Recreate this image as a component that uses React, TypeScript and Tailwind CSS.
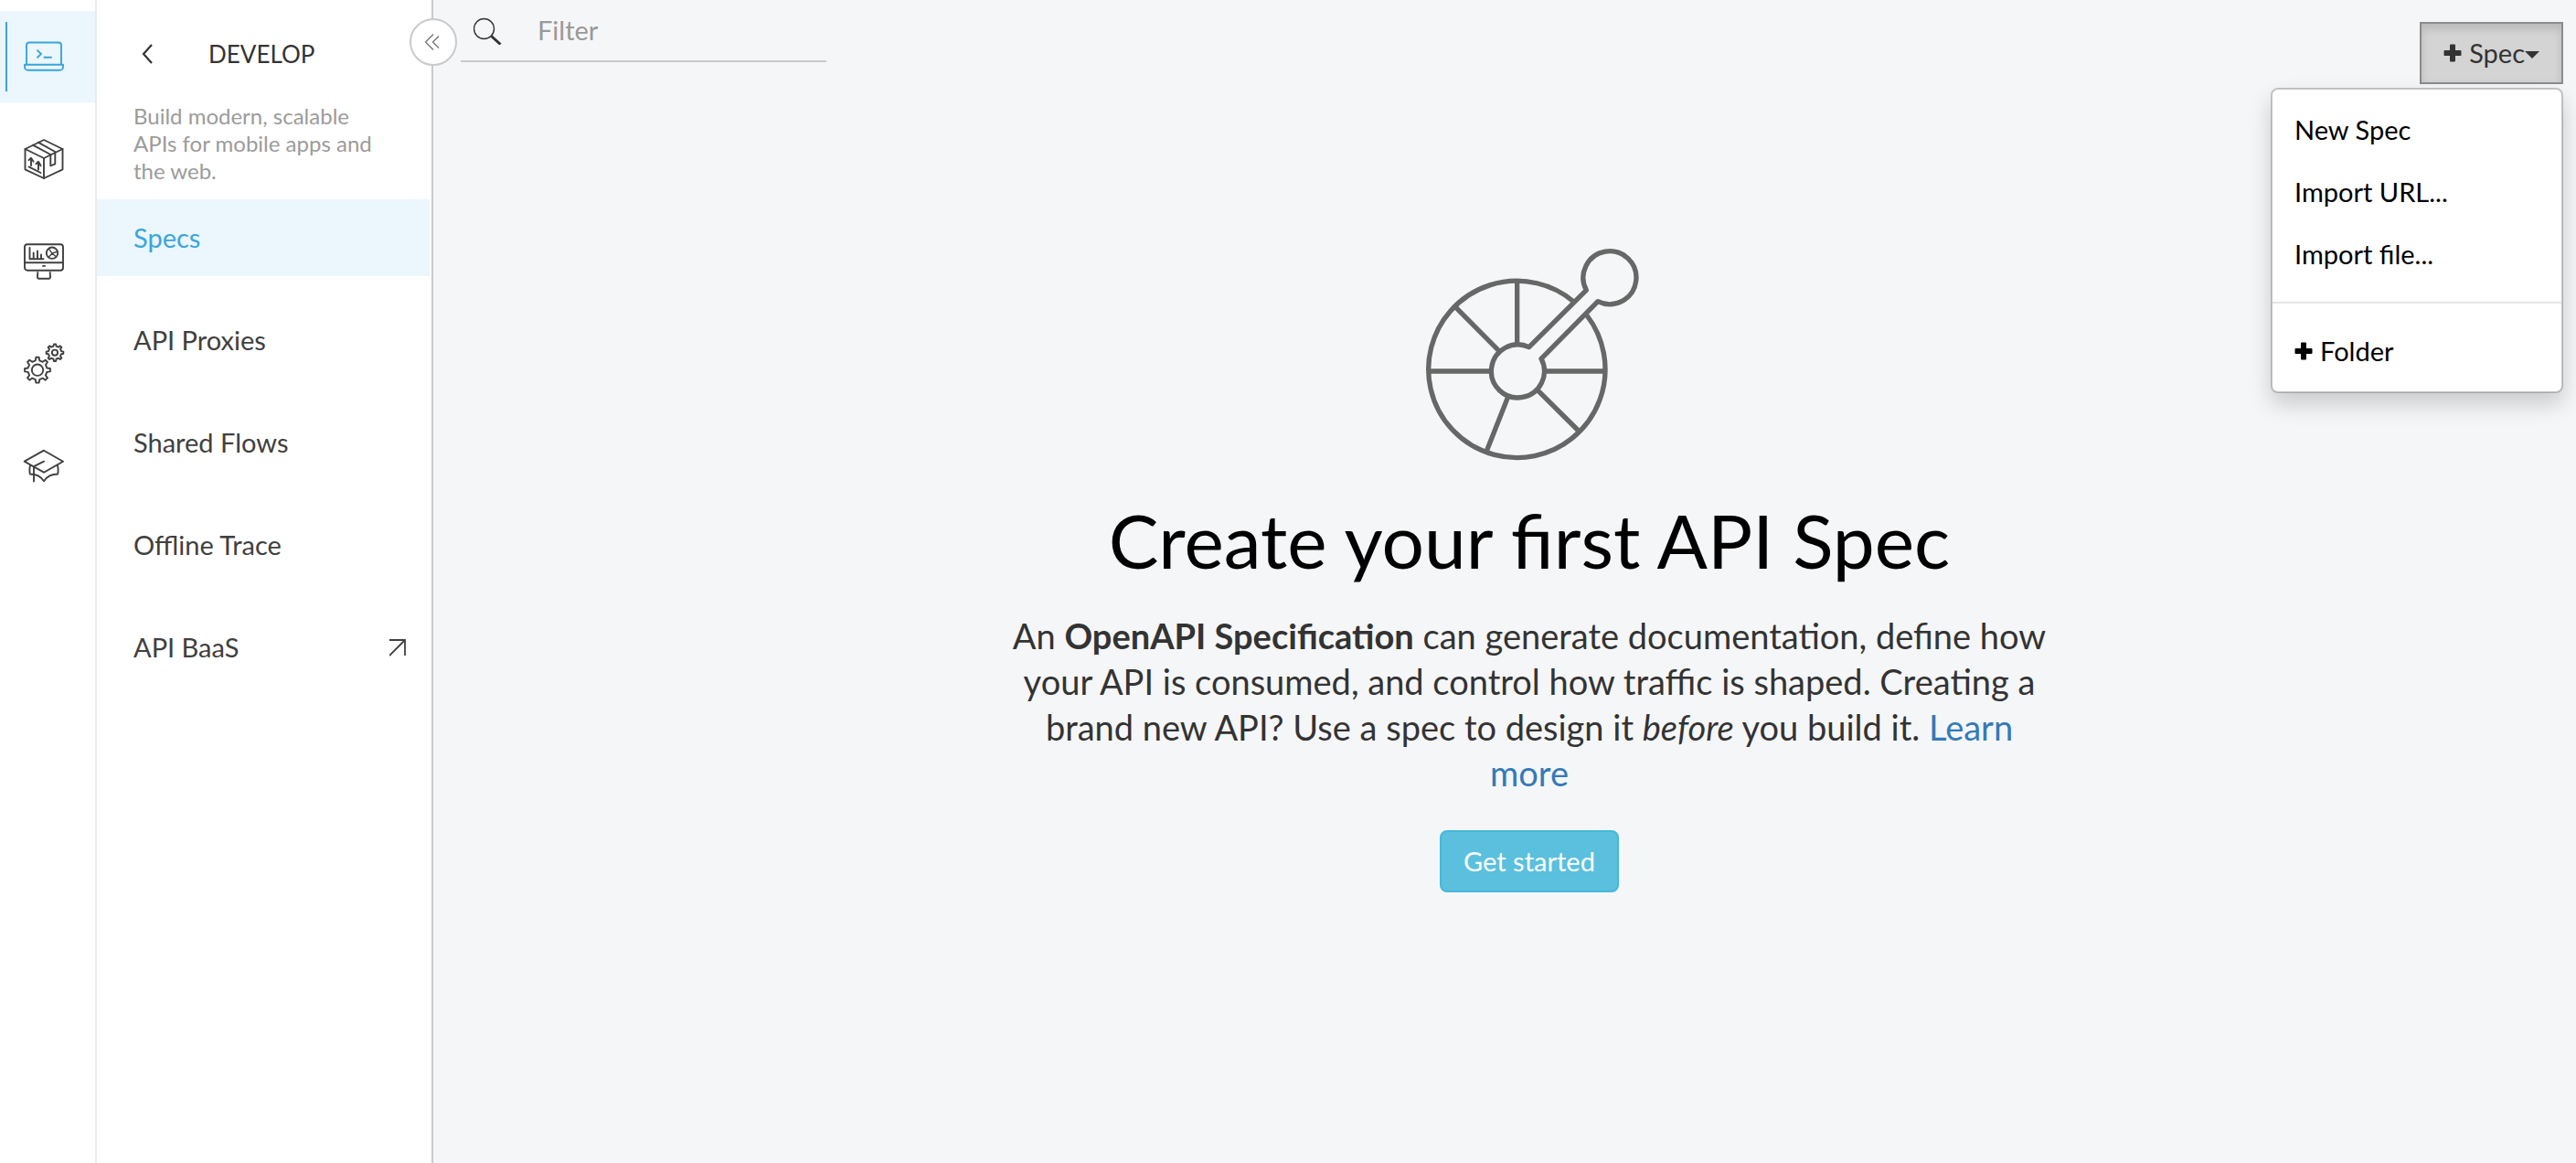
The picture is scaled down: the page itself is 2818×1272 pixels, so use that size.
import type { ReactNode } from "react";

function gearPath(cx: number, cy: number, outer: number, root: number, teeth: number) {
  const step = (Math.PI * 2) / teeth;
  const offsets: [number, number][] = [
    [-0.27, root],
    [-0.15, outer],
    [0.15, outer],
    [0.27, root],
  ];
  const points: string[] = [];
  for (let i = 0; i < teeth; i++) {
    for (const [offset, radius] of offsets) {
      const angle = step * (i + offset) - Math.PI / 2;
      points.push(`${(cx + radius * Math.cos(angle)).toFixed(2)} ${(cy + radius * Math.sin(angle)).toFixed(2)}`);
    }
  }
  return `M${points.join("L")}Z`;
}

function RailIcon({ children }: { children: ReactNode }) {
  return (
    <svg
      className="size-12"
      viewBox="0 0 48 48"
      fill="none"
      stroke="currentColor"
      strokeWidth="1.9"
      strokeLinecap="round"
      strokeLinejoin="round"
      aria-hidden="true"
    >
      {children}
    </svg>
  );
}

const sections = [
  {
    label: "Develop",
    active: true,
    icon: (
      <>
        <path d="M5 32.5V11.5a3 3 0 0 1 3-3h32a3 3 0 0 1 3 3v21" />
        <path d="M3 32.8h42v2.4a3.5 3.5 0 0 1-3.500 3.500H6.500A3.500 3.500 0 0 1 3 35.200z" />
        <path d="M16.500 16.800l4.500 4.200-4.500 4.200M23.700 24.800h9" strokeLinecap="butt" />
      </>
    ),
  },
  {
    label: "Publish",
    active: false,
    icon: (
      <>
        <path d="M24 3l20.500 10v22.300L24 45 3.500 35.300V13z" />
        <path d="M3.500 13L24 23l20.500-10M24 23v22" />
        <path d="M12 8.700L31.300 19v12.300l5-2V16L17.700 5.700" />
        <path d="M10 31V23M7.500 25.200L10 22.700l2.600 4M18 35.500V27.300M15.400 29.200l2.600-2.400 2.600 4.400M7.500 32.400l13 6.600" />
      </>
    ),
  },
  {
    label: "Analyze",
    active: false,
    icon: (
      <>
        <rect x="3" y="5.200" width="42" height="28.600" rx="3" />
        <path d="M3 25.300h42M23 28.900h2" />
        <path d="M17.300 36c0 3-.6 4-.3 5.500.2 1 .7 1.200 1.500 1.200h11c.8 0 1.300-.2 1.500-1.200.3-1.500-.3-2.500-.3-5.500" />
        <path d="M8.500 9v12.300h15M12.700 21v-6.500M17 21v-8.500M21 21v-4.500" />
        <circle cx="33" cy="14.700" r="6.200" />
        <path d="M33 15.200l-3.500-5M33 15.200l5.800-2.200M33 15.200l-4 4.200M33 15.200l4.500 3.600" strokeWidth="1.400" />
      </>
    ),
  },
  {
    label: "Admin",
    active: false,
    icon: (
      <>
        <path d={gearPath(17, 30.7, 14, 10.6, 8)} />
        <circle cx="17" cy="30.700" r="6.200" />
        <path d={gearPath(36, 11.7, 9.4, 7.2, 8)} />
        <circle cx="36" cy="11.700" r="3.100" />
      </>
    ),
  },
  {
    label: "Learn",
    active: false,
    icon: (
      <>
        <path d="M24 6.700l21 12-21 12-21.300-12z" />
        <path d="M24 18.700l-11 5.500v16.300" />
        <path d="M9 23c-.8 3-.8 6-.2 9.500 6 0 11.500 2 15.200 7.800 3.700-5.800 9.200-7.800 15.200-7.800.6-3.500.6-6.500-.2-9.500" />
      </>
    ),
  },
];

const links = [
  { label: "Specs", active: true, external: false },
  { label: "API Proxies", active: false, external: false },
  { label: "Shared Flows", active: false, external: false },
  { label: "Offline Trace", active: false, external: false },
  { label: "API BaaS", active: false, external: true },
];

function PlusIcon() {
  return (
    <svg className="size-5 shrink-0" viewBox="0 0 20 20" fill="currentColor" aria-hidden="true">
      <path d="M8 0.500h4a1 1 0 0 1 1 1V7h5.500a1 1 0 0 1 1 1v4a1 1 0 0 1-1 1H13v5.500a1 1 0 0 1-1 1H8a1 1 0 0 1-1-1V13H1.500a1 1 0 0 1-1-1V8a1 1 0 0 1 1-1H7V1.500a1 1 0 0 1 1-1z" />
    </svg>
  );
}

function SpecWheel() {
  return (
    <svg
      className="h-[234px] w-[246px]"
      viewBox="60 60 738 702"
      fill="none"
      stroke="#666766"
      strokeWidth="16"
      strokeLinejoin="round"
      aria-hidden="true"
    >
      <path d="M575 240A290 290 0 1 0 618 285" />
      <path d="M428 389A87 87 0 1 0 468 427L654 239A87 87 0 1 0 616 202z" />
      <path d="M389 172v208M186 257l143 144M100 468h202M476 468h202M455 529l138 137M360 550l-72 182" />
    </svg>
  );
}

export default function App() {
  return (
    <div className="flex min-h-screen bg-[#f5f6f8] font-['Lato',sans-serif] text-[29px] leading-10 text-[#333]">
      <nav aria-label="Sections" className="flex w-[106px] shrink-0 flex-col gap-3 border-r-2 border-[#ebebeb] bg-white pt-3">
        {sections.map((section) => (
          <a
            key={section.label}
            href="#"
            aria-label={section.label}
            className={
              section.active
                ? "flex h-[100px] items-center bg-[#ebf6fd] pl-1.5 text-[#3aa5dc]"
                : "flex h-[100px] items-center pl-1.5 text-[#404040]"
            }
          >
            <span className={section.active ? "mr-4 h-[76px] w-0.5 bg-[#3aa5dc]" : "mr-4 h-[76px] w-0.5"} />
            <RailIcon>{section.icon}</RailIcon>
          </a>
        ))}
      </nav>

      <aside className="relative w-[368px] shrink-0 border-r-2 border-[#c9cacc] bg-white">
        <header className="flex h-[112px] items-center pt-1.5">
          <button type="button" aria-label="Back" className="ml-[42px] flex size-6 items-center justify-center">
            <svg className="size-6" viewBox="0 0 24 24" fill="none" stroke="#333" strokeWidth="2.200" aria-hidden="true">
              <path d="M18 2L9 12l9 10" />
            </svg>
          </button>
          <h2 className="ml-14 text-[26px]">DEVELOP</h2>
        </header>
        <p className="h-[106px] pr-10 pl-10 text-2xl leading-[30px] text-[#9b9b9b]">
          Build modern, scalable APIs for mobile apps and the web.
        </p>
        <ul className="flex flex-col gap-7">
          {links.map((link) => (
            <li key={link.label}>
              <a
                href="#"
                className={
                  link.active
                    ? "mr-0.5 flex h-[84px] items-center justify-between bg-[#ebf6fd] pr-6 pl-10 text-[#3aa5dc]"
                    : "mr-0.5 flex h-[84px] items-center justify-between pr-6 pl-10 text-[#404040]"
                }
              >
                {link.label}
                {link.external && (
                  <svg className="size-5" viewBox="0 0 20 20" fill="none" stroke="currentColor" strokeWidth="1.800" aria-hidden="true">
                    <path d="M0 2h17v17M17 2L0 19" />
                  </svg>
                )}
              </a>
            </li>
          ))}
        </ul>
        <button
          type="button"
          aria-label="Collapse menu"
          className="absolute top-5 -right-7 flex size-[52px] items-center justify-center rounded-full border-2 border-[#c9cacc] bg-white"
        >
          <svg className="size-5" viewBox="0 0 20 20" fill="none" stroke="#777" strokeWidth="1.400" aria-hidden="true">
            <path d="M10 1.500L1.500 10l8.500 8.500M16 3.500L9.500 10l6.500 6.500" />
          </svg>
        </button>
      </aside>

      <div className="flex min-w-0 flex-1 flex-col">
        <div className="flex h-24 items-start justify-between pr-3.5 pl-[30px]">
          <label className="flex h-[68px] w-[400px] items-center border-b-2 border-[#c9cacc] pl-3.5">
            <svg className="size-8 shrink-0" viewBox="0 0 32 32" fill="none" stroke="#333" aria-hidden="true">
              <circle cx="11.500" cy="14.500" r="11" strokeWidth="1.400" />
              <path d="M19.500 22.500l10 9" strokeWidth="3" />
            </svg>
            <input
              type="text"
              aria-label="Filter"
              placeholder="Filter"
              className="ml-[38px] min-w-0 flex-1 bg-transparent outline-none placeholder:text-[#999]"
            />
          </label>

          <div className="relative pt-6">
            <button
              type="button"
              aria-expanded="true"
              className="flex h-[68px] items-center border-2 border-[#8c8c8c] bg-[#d4d4d4] px-6 shadow-[inset_0_6px_10px_rgba(0,0,0,0.125)]"
            >
              <PlusIcon />
              <span className="ml-2">Spec</span>
              <svg className="mt-1 h-2 w-4" viewBox="0 0 16 8" fill="currentColor" aria-hidden="true">
                <path d="M0 0h16L8 8z" />
              </svg>
            </button>
            <ul
              role="menu"
              className="absolute top-24 right-0 w-80 rounded-lg border-2 border-black/20 bg-white bg-clip-padding py-2.5 text-black shadow-[0_12px_24px_rgba(0,0,0,0.175)]"
            >
              {["New Spec", "Import URL...", "Import file..."].map((item) => (
                <li key={item} role="none">
                  <button type="button" role="menuitem" className="flex h-[68px] w-full items-center px-6">
                    {item}
                  </button>
                </li>
              ))}
              <li role="separator" className="my-[18px] h-0.5 bg-[#e5e5e5]" />
              <li role="none">
                <button type="button" role="menuitem" className="flex h-[68px] w-full items-center gap-2 px-6">
                  <PlusIcon />
                  Folder
                </button>
              </li>
            </ul>
          </div>
        </div>

        <main className="flex flex-col items-center pt-[174px] pl-[54px] text-center">
          <SpecWheel />
          <h1 className="mt-[38px] text-[82px] leading-[96px] text-black">Create your first API Spec</h1>
          <p className="mt-8 w-[1144px] max-w-full text-[38px] leading-[50px]">
            An <strong>OpenAPI Specification</strong> can generate documentation, define how your API is consumed, and
            control how traffic is shaped. Creating a brand new API? Use a spec to design it <em>before</em> you build
            it.{" "}
            <a href="#" className="text-[#337ab7]">
              Learn more
            </a>
          </p>
          <button
            type="button"
            className="mt-[38px] h-[68px] rounded-lg border-2 border-[#46b8da] bg-[#5bc0de] px-6 text-white"
          >
            Get started
          </button>
        </main>
      </div>
    </div>
  );
}
